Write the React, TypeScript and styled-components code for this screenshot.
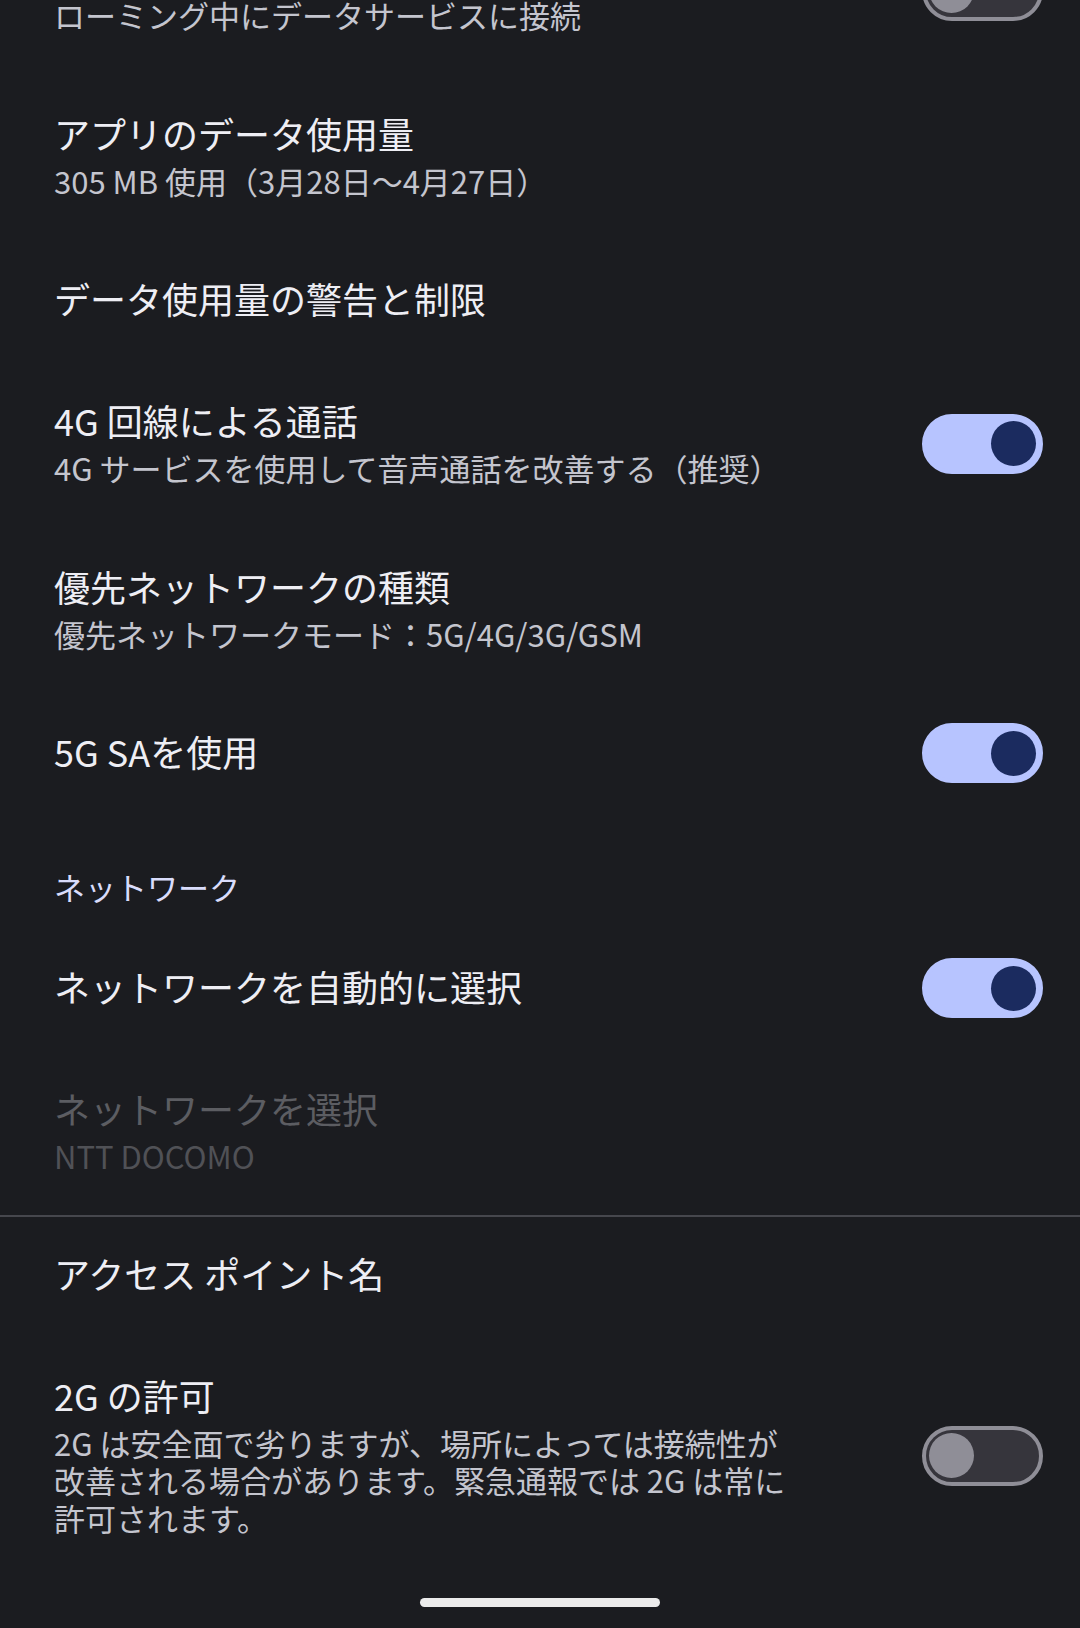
import React from 'react';
import styled, { createGlobalStyle } from 'styled-components';

const GlobalStyle = createGlobalStyle`
  html, body {
    margin: 0;
    padding: 0;
    background: #1b1c20;
    overflow: hidden;
  }
  * {
    box-sizing: border-box;
  }
`;

interface PrefItem {
  title: string;
  summary?: string;
  toggle?: boolean;
  disabled?: boolean;
}

const mobileItems: PrefItem[] = [
  { title: 'ローミング', summary: 'ローミング中にデータサービスに接続', toggle: false },
  { title: 'アプリのデータ使用量', summary: '305 MB 使用（3月28日〜4月27日）' },
  { title: 'データ使用量の警告と制限' },
  { title: '4G 回線による通話', summary: '4G サービスを使用して音声通話を改善する（推奨）', toggle: true },
  { title: '優先ネットワークの種類', summary: '優先ネットワークモード：5G/4G/3G/GSM' },
  { title: '5G SAを使用', toggle: true },
];

const networkItems: PrefItem[] = [
  { title: 'ネットワークを自動的に選択', toggle: true },
  { title: 'ネットワークを選択', summary: 'NTT DOCOMO', disabled: true },
];

const extraItems: PrefItem[] = [
  { title: 'アクセス ポイント名' },
  {
    title: '2G の許可',
    summary: '2G は安全面で劣りますが、場所によっては接続性が改善される場合があります。緊急通報では 2G は常に許可されます。',
    toggle: false,
  },
];

const Screen = styled.div`
  position: relative;
  width: 1080px;
  height: 1628px;
  overflow: hidden;
  background: #1b1c20;
  font-family: 'Noto Sans CJK JP', 'Noto Sans', sans-serif;
  display: flex;
  flex-direction: column;
`;

// the list is scrolled: the first row's title sits above the viewport
const List = styled.div`
  margin-top: -92px;
  display: flex;
  flex-direction: column;
`;

const Row = styled.div`
  display: flex;
  align-items: center;
  padding: 0 37px 0 54px;
`;

const TextCol = styled.div`
  flex: 1;
  min-width: 0;
  display: flex;
  flex-direction: column;
  padding: 36px 0 40px;
`;

const Title = styled.div<{ $disabled?: boolean }>`
  font-size: 36px;
  line-height: 46px;
  color: ${({ $disabled }) => ($disabled ? '#5c5d62' : '#eeeef4')};
`;

const Summary = styled.div<{ $disabled?: boolean }>`
  margin-top: 6px;
  font-size: 31px;
  line-height: 37.5px;
  color: ${({ $disabled }) => ($disabled ? '#505156' : '#c4c5ce')};
`;

const Widget = styled.div`
  flex: none;
  margin-left: 122px;
  display: flex;
  align-items: center;
`;

const Track = styled.div<{ $on: boolean }>`
  width: 121px;
  height: 60px;
  border-radius: 30px;
  padding: 0 3px;
  display: flex;
  align-items: center;
  justify-content: ${({ $on }) => ($on ? 'flex-end' : 'flex-start')};
  background: ${({ $on }) => ($on ? '#b7c4ff' : '#36353c')};
  border: 4px solid ${({ $on }) => ($on ? '#b7c4ff' : '#8f8e97')};
`;

const Thumb = styled.div<{ $on: boolean }>`
  width: 45px;
  height: 45px;
  border-radius: 50%;
  background: ${({ $on }) => ($on ? '#1b2b5f' : '#8f8e97')};
`;

const CategoryTitle = styled.div`
  padding: 54px 54px 21px;
  font-size: 31px;
  line-height: 38px;
  color: #d9dcfb;
`;

const Divider = styled.div`
  height: 2px;
  margin-bottom: -3px;
  background: #46474d;
`;

const NavBar = styled.div`
  position: absolute;
  left: 420px;
  top: 1598px;
  width: 240px;
  height: 9px;
  border-radius: 5px;
  background: #ebebeb;
`;

const Switch: React.FC<{ on: boolean }> = ({ on }) => (
  <Track $on={on}>
    <Thumb $on={on} />
  </Track>
);

const Preference: React.FC<{ item: PrefItem }> = ({ item }) => (
  <Row>
    <TextCol>
      <Title $disabled={item.disabled}>{item.title}</Title>
      {item.summary && <Summary $disabled={item.disabled}>{item.summary}</Summary>}
    </TextCol>
    {item.toggle !== undefined && (
      <Widget>
        <Switch on={item.toggle} />
      </Widget>
    )}
  </Row>
);

export default function App() {
  return (
    <Screen>
      <GlobalStyle />
      <List>
        {mobileItems.map((el) => (
          <Preference key={el.title} item={el} />
        ))}
        <CategoryTitle>ネットワーク</CategoryTitle>
        {networkItems.map((el) => (
          <Preference key={el.title} item={el} />
        ))}
        <Divider />
        {extraItems.map((el) => (
          <Preference key={el.title} item={el} />
        ))}
      </List>
      <NavBar />
    </Screen>
  );
}
